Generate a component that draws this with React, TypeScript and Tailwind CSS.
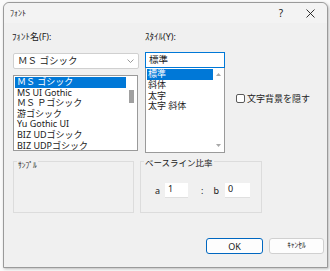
const jp = { fontFamily: '"Noto Sans", "Noto Sans CJK JP", sans-serif' }

const fonts = ["ＭＳ ゴシック", "MS UI Gothic", "ＭＳ Ｐゴシック", "游ゴシック", "Yu Gothic UI", "BIZ UDゴシック", "BIZ UDPゴシック"]
const styles = ["標準", "斜体", "太字", "太字 斜体"]

export default function App() {
  return (
    <div className="w-[330px] h-[271px] bg-[#fafafa] overflow-hidden text-[#1a1a1a]" style={jp}>
      {/* Window */}
      <div className="ml-[3px] mt-[2px] w-[325px] h-[266px] border border-[#9a9a9a] rounded-t-[6px] bg-[#f0f0f0] flex flex-col shadow-[1px_1px_3px_rgba(0,0,0,0.25)]">
        {/* Title bar */}
        <div className="h-[20px] flex items-center bg-[#f3f3f3] rounded-t-[6px]">
          <span className="ml-[6px] text-[8px] leading-none">ﾌｫﾝﾄ</span>
          <span className="ml-auto text-[10px] leading-none mr-[23px]">?</span>
          <svg width="9" height="9" viewBox="0 0 9 9" className="mr-[12px]">
            <path d="M0.5 0.5 L8.5 8.5 M8.5 0.5 L0.5 8.5" stroke="#1a1a1a" strokeWidth="0.9" />
          </svg>
        </div>

        {/* Body */}
        <div className="flex-1 flex flex-col pl-[9px]">
          <div className="flex pt-[8px]">
            {/* Font name */}
            <div className="w-[132px] flex flex-col">
              <div className="text-[9px] leading-[12px] ml-[-1px]">ﾌｫﾝﾄ名(F):</div>
              <div className="mt-[10px] w-[126px] h-[16px] bg-white border border-[#d0d0d0] rounded-[2px] flex items-center px-[4px]">
                <span className="text-[9.5px] leading-none">ＭＳ ゴシック</span>
                <svg width="7" height="4" viewBox="0 0 7 4" className="ml-auto">
                  <path d="M0.5 0.5 L3.5 3.5 L6.5 0.5" fill="none" stroke="#808080" strokeWidth="0.8" />
                </svg>
              </div>
              <div className="mt-[6px] w-[125px] h-[76px] bg-white border border-[#9a9a9a] flex overflow-hidden">
                <div className="flex-1 flex flex-col pt-[1px] pl-[1px]">
                  {fonts.map((f, i) => (
                    <div
                      key={f}
                      className={`h-[10.6px] leading-[10.6px] text-[9px] pl-[2px] whitespace-nowrap ${i === 0 ? "bg-[#0078d7] text-white" : ""}`}
                    >
                      {f}
                    </div>
                  ))}
                </div>
                <div className="w-[11px] bg-white flex justify-center">
                  <div className="mt-[14px] w-[5px] h-[13px] bg-[#a0a0a0]" />
                </div>
              </div>
            </div>

            {/* Style */}
            <div className="w-[80px] flex flex-col">
              <div className="text-[9px] leading-[12px]">ｽﾀｲﾙ(Y):</div>
              <div className="mt-[9px] h-[16px] bg-white border border-[#0078d7] flex items-center px-[3px]">
                <span className="text-[9.5px] leading-none">標準</span>
              </div>
              <div className="h-[85px] bg-white border border-[#9a9a9a] border-t-0 flex">
                <div className="flex-1 flex flex-col pt-[1px] pl-[1px]">
                  {styles.map((s, i) => (
                    <div
                      key={s}
                      className={`h-[10.8px] leading-[10.8px] text-[9px] pl-[1px] whitespace-nowrap ${i === 0 ? "bg-[#0078d7] text-white" : ""}`}
                    >
                      {s}
                    </div>
                  ))}
                </div>
                <div className="w-[11px] flex flex-col items-center justify-between py-[5px]">
                  <svg width="5" height="3" viewBox="0 0 5 3">
                    <path d="M0 3 L2.5 0 L5 3 Z" fill="#a8a8a8" />
                  </svg>
                  <svg width="5" height="3" viewBox="0 0 5 3">
                    <path d="M0 0 L2.5 3 L5 0 Z" fill="#a8a8a8" />
                  </svg>
                </div>
              </div>
            </div>

            {/* Checkbox */}
            <div className="ml-[11px] mt-[63px] flex items-start">
              <div className="w-[9px] h-[9px] border border-[#5a5a5a] rounded-[2px] bg-white" />
              <span className="ml-[2px] text-[9px] leading-[9px]">文字背景を隠す</span>
            </div>
          </div>

          {/* Groups */}
          <div className="flex mt-[8px] gap-[6px]">
            <div className="relative w-[121px] h-[52px] border border-[#dcdcdc]">
              <span className="absolute left-[3px] top-[-1px] text-[7.5px] leading-[8px] bg-[#f0f0f0] px-[1px] text-[#222]">ｻﾝﾌﾟﾙ</span>
            </div>
            <div className="relative w-[122px] h-[52px] border border-[#dcdcdc] flex items-start">
              <span className="absolute left-[3px] top-[-4px] text-[8.5px] leading-[10px] bg-[#f0f0f0] px-[1px]">ベースライン比率</span>
              <div className="mt-[21px] ml-[14px] flex items-center text-[9px]">
                <span className="leading-none">a</span>
                <div className="ml-[5px] w-[23px] h-[15px] bg-white border-b border-[#e0e0e0] pl-[3px] text-[9px] leading-[12px]">1</div>
                <span className="ml-[13px] leading-none">:</span>
                <span className="ml-[10px] leading-none">b</span>
                <div className="ml-[6px] w-[25px] h-[15px] bg-white border-b border-[#e0e0e0] pl-[3px] text-[9px] leading-[12px]">0</div>
              </div>
            </div>
          </div>

          {/* Buttons */}
          <div className="mt-[25px] flex justify-end gap-[6px] mr-[3px]">
            <div className="w-[57px] h-[16px] bg-[#fdfdfd] border border-[#0067c0] rounded-[3px] flex items-center justify-center text-[9px] leading-none">
              OK
            </div>
            <div className="w-[55px] h-[16px] bg-[#fdfdfd] border border-[#d0d0d0] rounded-[3px] flex items-center justify-center text-[7.5px] leading-none">
              ｷｬﾝｾﾙ
            </div>
          </div>
        </div>
      </div>
    </div>
  )
}
